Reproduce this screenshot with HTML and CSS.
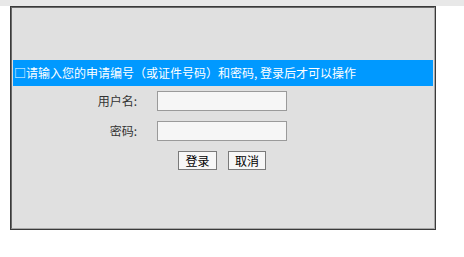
FILE: index.html
```html
<!DOCTYPE html>
<html lang="zh-CN">
<head>
<meta charset="utf-8">
<title>登录</title>
<link rel="stylesheet" href="styles.css">
</head>
<body>
<div class="topstrip"></div>
<div class="frame">
  <div class="frame-inner">
    <div class="notice">□请输入您的申请编号（或证件号码）和密码, 登录后才可以操作</div>
    <form class="login">
      <label class="lbl" for="u">用户名:</label>
      <input class="field" id="u" type="text">
      <label class="lbl" for="p">密码:</label>
      <input class="field" id="p" type="password">
      <div class="buttons">
        <button type="button" class="btn btn-login">登录</button>
        <button type="button" class="btn btn-cancel">取消</button>
      </div>
    </form>
  </div>
</div>
</body>
</html>
```
FILE: styles.css
```css
html, body {
  margin: 0;
  padding: 0;
  background: #ffffff;
  font-family: "Noto Sans CJK SC", "Noto Sans", sans-serif;
  font-size: 12px;
}
.topstrip {
  height: 6px;
  background: #e8e8e8;
}
.frame {
  margin-left: 10px;
  width: 426px;
  height: 224px;
  box-sizing: border-box;
  border: 1px solid #3a3a3a;
}
.frame-inner {
  height: 100%;
  box-sizing: border-box;
  border-style: solid;
  border-width: 1px;
  border-color: #6a6a6a #a8a8a8 #a8a8a8 #6a6a6a;
  background: #e0e0e0;
  padding: 52px 1px 0 1px;
}
.notice {
  height: 26px;
  line-height: 26px;
  background: #0099ff;
  color: #ffffff;
  padding-left: 1px;
  white-space: nowrap;
  overflow: hidden;
  letter-spacing: 0;
}
.login {
  display: grid;
  grid-template-columns: 124px 130px;
  column-gap: 20px;
  row-gap: 10px;
  padding-top: 5px;
  align-items: center;
}
.lbl {
  text-align: right;
  color: #333333;
  line-height: 20px;
}
.field {
  box-sizing: border-box;
  width: 130px;
  height: 20px;
  margin: 0;
  border: 1px solid #9a9a9a;
  background: #f6f6f6;
  padding: 0 3px;
}
.buttons {
  grid-column: 2;
  display: flex;
  justify-content: center;
  gap: 11px;
}
.btn {
  box-sizing: border-box;
  height: 19px;
  margin: 0;
  padding: 0;
  border: 1px solid #7a7a7a;
  background: #f7f7f7;
  color: #000000;
  font-family: "Noto Sans CJK SC", "Noto Sans", sans-serif;
  font-size: 12px;
  line-height: 17px;
}
.btn-login { width: 39px; }
.btn-cancel { width: 38px; }
```
